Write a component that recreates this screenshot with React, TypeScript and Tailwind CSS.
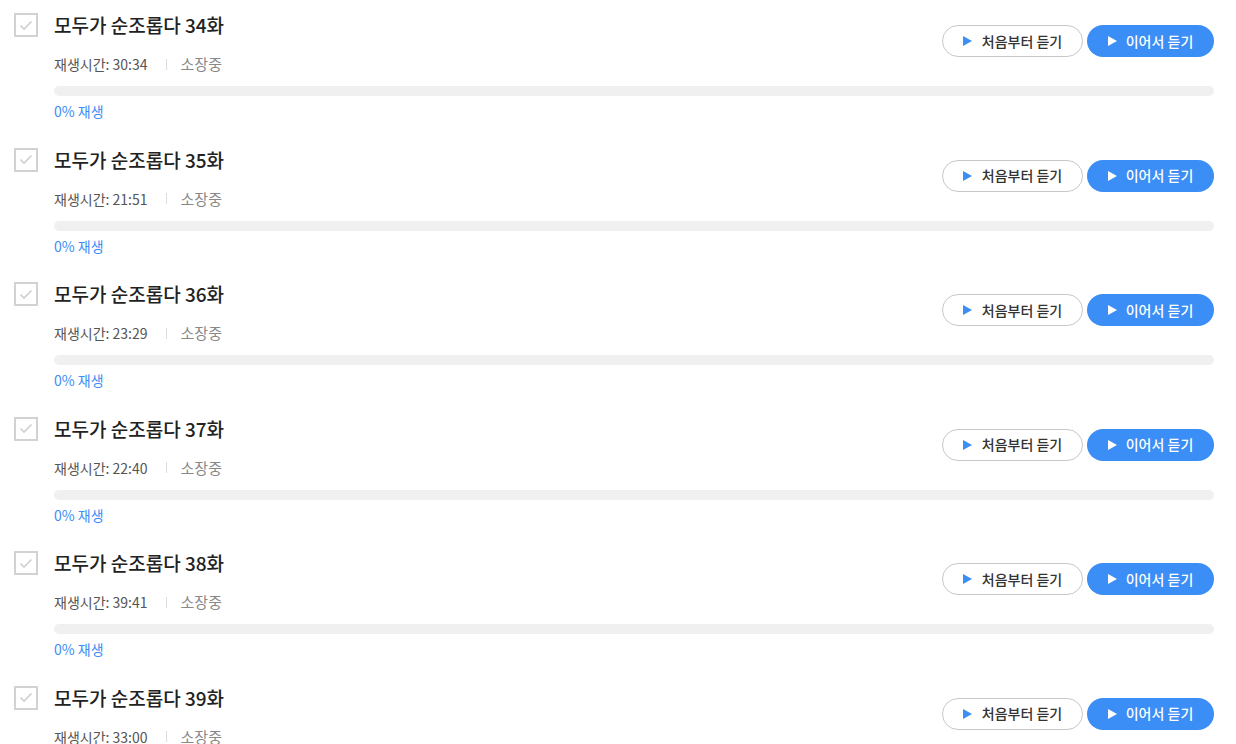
import React from 'react';

type Episode = { no: number; time: string };

const episodes: Episode[] = [
  { no: 34, time: '30:34' },
  { no: 35, time: '21:51' },
  { no: 36, time: '23:29' },
  { no: 37, time: '22:40' },
  { no: 38, time: '39:41' },
  { no: 39, time: '33:00' },
];

function Play({ className }: { className?: string }) {
  return (
    <svg width="9" height="10" viewBox="0 0 9 10" className={className}>
      <path d="M0 0 L9 5 L0 10 Z" fill="currentColor" />
    </svg>
  );
}

function EpisodeRow({ ep }: { ep: Episode }) {
  return (
    <div className="flex h-[134.6px] pl-[14px] pr-[22px]">
      <div className="flex h-6 w-6 shrink-0 items-center justify-center border-2 border-[#d2d2d2] bg-white">
        <svg width="14" height="11" viewBox="0 0 14 11">
          <path d="M1.5 5.5 L5 9 L12.5 1.5" fill="none" stroke="#cfcfcf" strokeWidth="1.6" />
        </svg>
      </div>
      <div className="ml-4 flex-1">
        <div className="flex items-start justify-between">
          <div>
            <div className="mt-[-1px] h-[26px] text-[19px] font-medium leading-[26px] text-[#222]">
              모두가 순조롭다 {ep.no}화
            </div>
            <div className="mt-4 flex h-5 items-center leading-5">
              <span className="text-[14px] text-[#555]">재생시간: {ep.time}</span>
              <span className="ml-[18px] mr-[14px] h-[11px] w-px bg-[#ddd]" />
              <span className="text-[15px] text-[#888]">소장중</span>
            </div>
          </div>
          <div className="mt-3 flex gap-1">
            <button className="flex h-8 w-[141px] items-center justify-center gap-[10px] rounded-full border border-[#c8c8c8] bg-white text-[14px] font-medium text-[#333]">
              <Play className="text-[#3b8ef6]" />
              <span>처음부터 듣기</span>
            </button>
            <button className="flex h-8 w-[127px] items-center justify-center gap-[9px] rounded-full bg-[#3b8ef6] text-[14px] font-medium text-white">
              <Play className="text-white" />
              <span>이어서 듣기</span>
            </button>
          </div>
        </div>
        <div className="mt-3 h-[10px] w-full rounded-full bg-[#f0f0f0]" />
        <div className="mt-[5px] text-[14px] leading-5 text-[#3b8ef6]">0% 재생</div>
      </div>
    </div>
  );
}

export default function App() {
  return (
    <div
      className="h-[744px] w-[1236px] overflow-hidden bg-white pt-[13px]"
      style={{ fontFamily: '"Noto Sans CJK KR", "Noto Sans", sans-serif' }}
    >
      {episodes.map((ep) => (
        <EpisodeRow key={ep.no} ep={ep} />
      ))}
    </div>
  );
}
